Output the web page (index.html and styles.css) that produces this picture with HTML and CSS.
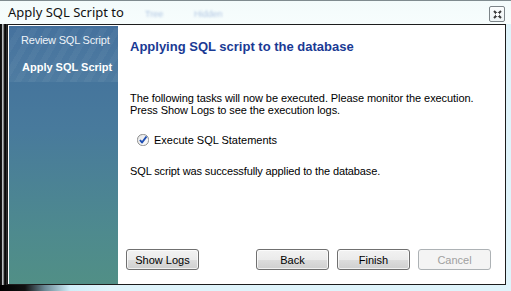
FILE: index.html
```html
<!DOCTYPE html>
<html>
<head>
  <meta charset="utf-8">
  <title>Apply SQL Script to</title>
  <link rel="stylesheet" href="styles.css">
</head>
<body>
  <div class="window">
    <header class="titlebar">
      <span class="caption">Apply SQL Script to</span>
      <span class="ghost ghost-tree">Tree</span>
      <span class="ghost ghost-hidden">Hidden</span>
      <button class="close-btn" title="Close">
        <svg width="9" height="9" viewBox="0 0 9 9">
          <path d="M1 1 L8 8 M8 1 L1 8" stroke="#3a3a3a" stroke-width="2" fill="none"/>
          <rect x="3" y="3" width="3" height="3" fill="#fff"/>
        </svg>
      </button>
    </header>

    <div class="middle">
      <div class="edge-left"></div>
      <div class="frame">
        <nav class="steps">
          <div class="steps-band"></div>
          <div class="step">Review SQL Script</div>
          <div class="step current">Apply SQL Script</div>
        </nav>
        <main class="content">
          <h3 class="heading">Applying SQL script to the database</h3>
          <p class="intro">The following tasks will now be executed. Please monitor the execution.<br>Press Show Logs to see the execution logs.</p>
          <div class="task">
            <svg class="check" width="12" height="12" viewBox="0 0 12 12">
              <defs>
                <linearGradient id="cb" x1="0" y1="0" x2="1" y2="1">
                  <stop offset="0" stop-color="#e4e4e4"/>
                  <stop offset="1" stop-color="#ffffff"/>
                </linearGradient>
              </defs>
              <rect x="0.5" y="0.5" width="11" height="11" rx="5" fill="url(#cb)" stroke="#8e8f8f"/>
              <path d="M3 6 L5 8.5 L9.5 2.5" stroke="#1f4fb4" stroke-width="2" fill="none" stroke-linejoin="round"/>
            </svg>
            <span>Execute SQL Statements</span>
          </div>
          <p class="result">SQL script was successfully applied to the database.</p>
          <div class="buttons">
            <button class="btn">Show Logs</button>
            <div class="spacer"></div>
            <button class="btn">Back</button>
            <button class="btn">Finish</button>
            <button class="btn" disabled>Cancel</button>
          </div>
        </main>
      </div>
      <div class="edge-right"></div>
    </div>

    <div class="bottom-edge"></div>
  </div>
</body>
</html>
```

FILE: styles.css
```css
html, body {
    margin: 0;
    padding: 0;
}
body {
    width: 511px;
    height: 291px;
    overflow: hidden;
    font-family: "Liberation Sans", Arial, sans-serif;
    font-size: 11px;
    color: #000;
}
.window {
    width: 511px;
    height: 291px;
    display: flex;
    flex-direction: column;
    background: #dff4fb;
}

/* title bar */
.titlebar {
    position: relative;
    height: 24px;
    box-sizing: border-box;
    border-top: 1px solid #7f8b8f;
    background: linear-gradient(#f3fbfb, #f7fdfd);
    display: flex;
    align-items: center;
    padding-left: 8px;
}
.caption {
    font-family: "Noto Sans", "Open Sans", sans-serif;
    font-size: 13px;
    color: #111;
    margin-top: -1px;
}
.ghost {
    position: absolute;
    top: 8px;
    font-size: 9px;
    color: #7f9fd0;
    filter: blur(1.3px);
    opacity: 0.6;
}
.ghost-tree { left: 145px; }
.ghost-hidden { left: 194px; }
.close-btn {
    position: absolute;
    right: 6px;
    top: 5px;
    width: 16px;
    height: 16px;
    padding: 0;
    border: 1px solid #7c8488;
    border-radius: 2px;
    background: linear-gradient(#fbfdfd, #eef4f5);
    display: flex;
    align-items: center;
    justify-content: center;
}

/* middle row */
.middle {
    height: 261px;
    display: flex;
}
.edge-left {
    width: 7px;
    background:
        linear-gradient(to right, #0b0b0b 0, #1a1a1a 2px, #9aa0a4 2px, #d8dcde 3px, #222 4px, #000 6px, #555 7px);
}
.edge-right {
    width: 5px;
    background: #dff4fb;
}
.frame {
    width: 499px;
    box-sizing: border-box;
    border: 1px solid #1d1d1d;
    background: #fff;
    padding: 1px 0 0 1px;
    display: flex;
}
.bottom-edge {
    height: 6px;
    background: linear-gradient(to right, #000 0, #111 25px, #6c8a96 45px, #cfeef8 70px, #dff4fb 110px);
}

/* steps sidebar */
.steps {
    position: relative;
    width: 109px;
    background: linear-gradient(#426f9c 0, #487a9c 40%, #4e8a8e 80%, #518f86 100%);
    padding-top: 8px;
    overflow: hidden;
}
.steps-band {
    position: absolute;
    left: 0;
    right: 0;
    top: 2px;
    height: 54px;
    background:
        repeating-linear-gradient(-60deg, rgba(255,255,255,0.035) 0 6px, rgba(255,255,255,0) 6px 12px),
        linear-gradient(rgba(255,255,255,0.02), rgba(255,255,255,0.05));
}
.step {
    position: relative;
    color: #eef3f8;
    font-size: 11px;
    line-height: 13px;
    padding-left: 12px;
    letter-spacing: -0.2px;
}
.step + .step {
    margin-top: 14px;
}
.step.current {
    font-weight: bold;
    color: #fff;
    padding-left: 13px;
    letter-spacing: 0;
}

/* content pane */
.content {
    flex: 1;
    display: flex;
    flex-direction: column;
    padding: 12px 14px 14px 12px;
}
.heading {
    margin: 0;
    font-size: 13px;
    line-height: 17px;
    font-weight: bold;
    color: #1a3a94;
}
.intro {
    margin: 37px 0 0;
    line-height: 12px;
    letter-spacing: -0.08px;
}
.task {
    margin: 17px 0 0 7px;
    display: flex;
    align-items: center;
    gap: 5px;
    height: 14px;
}
.result {
    margin: 18px 0 0;
    line-height: 13px;
    letter-spacing: -0.12px;
}
.buttons {
    margin-top: auto;
    margin-left: -4px;
    display: flex;
    gap: 8px;
}
.spacer {
    flex: 1;
}
.btn {
    width: 73px;
    height: 21px;
    padding: 0;
    font-family: "Liberation Sans", Arial, sans-serif;
    font-size: 11px;
    color: #000;
    border: 1px solid #707070;
    border-radius: 3px;
    background: linear-gradient(#f2f2f2 0, #ebebeb 50%, #dddddd 51%, #cfcfcf 100%);
    box-shadow: inset 0 0 0 1px rgba(255,255,255,0.7);
}
.btn:disabled {
    color: #a0a0a0;
    border-color: #adb2b5;
    background: #f4f4f4;
    box-shadow: none;
}
```
